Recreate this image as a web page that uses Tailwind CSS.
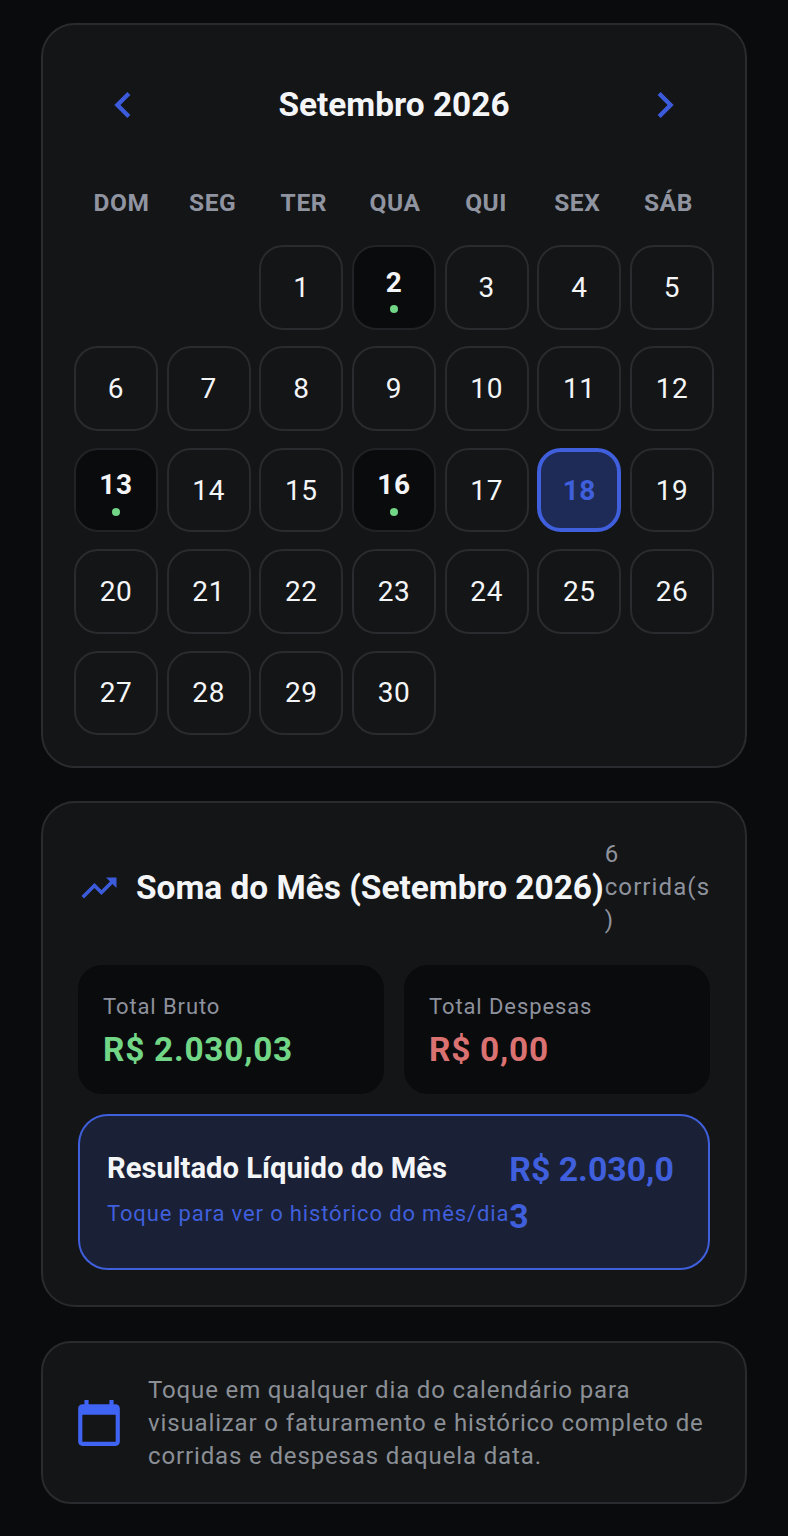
<!DOCTYPE html>
<html lang="pt-BR">
<head>
    <meta charset="UTF-8" />
    <meta name="viewport" content="width=device-width, initial-scale=1.0"/>
    <title>Calendário</title>
    <script src="https://cdn.jsdelivr.net/npm/@tailwindcss/browser@4"></script>
</head>
<body class="bg-[#0a0b0d] font-['Roboto',sans-serif] min-h-screen">
    <main class="w-[706px] ml-[41px] pt-[23px] flex flex-col gap-[33.3px]">

        <!-- calendario -->
        <section class="bg-[#141517] border-2 border-[#2a2b2e] rounded-[34px] px-[31px] pt-[31px] pb-[31px]">
            <div class="h-[98px] flex items-center justify-between pl-[23px] pr-[23px]">
                <svg class="w-[52px] h-[52px] text-[#3b5bdb]" viewBox="0 0 24 24" fill="currentColor"><path d="M15.41 7.41L14 6l-6 6 6 6 1.41-1.41L10.83 12z"/></svg>
                <h1 class="text-[33.4px] leading-none font-bold text-[#f4f5f7]">Setembro 2026</h1>
                <svg class="w-[52px] h-[52px] text-[#3b5bdb]" viewBox="0 0 24 24" fill="currentColor"><path d="M10 6L8.59 7.41 13.17 12l-4.58 4.59L10 18l6-6z"/></svg>
            </div>

            <div class="grid grid-cols-7 pl-[2px] mt-[33px] mb-[26px] text-center text-[24.5px] leading-[32px] font-bold tracking-[0.6px] text-[#9094a0]">
                <div>DOM</div><div>SEG</div><div>TER</div><div>QUA</div><div>QUI</div><div>SEX</div><div>SÁB</div>
            </div>

            <div class="grid grid-cols-7 gap-x-[8.67px] gap-y-[16.9px] text-[28px] tracking-[0.6px] text-[#f4f5f7]">
                <div></div><div></div>
                <div class="h-[84.5px] pt-px rounded-[24px] border-2 border-[#2a2b2e] flex items-center justify-center">1</div>
                <div class="h-[84.5px] rounded-[24px] border-2 border-[#222326] bg-[#0a0b0d] flex flex-col items-center justify-center pt-[5px] font-bold"><span class="leading-[32px]">2</span><span class="w-[8px] h-[8px] mt-[6.5px] rounded-full bg-[#72d687]"></span></div>
                <div class="h-[84.5px] pt-px rounded-[24px] border-2 border-[#2a2b2e] flex items-center justify-center">3</div>
                <div class="h-[84.5px] pt-px rounded-[24px] border-2 border-[#2a2b2e] flex items-center justify-center">4</div>
                <div class="h-[84.5px] pt-px rounded-[24px] border-2 border-[#2a2b2e] flex items-center justify-center">5</div>

                <div class="h-[84.5px] pt-px rounded-[24px] border-2 border-[#2a2b2e] flex items-center justify-center">6</div>
                <div class="h-[84.5px] pt-px rounded-[24px] border-2 border-[#2a2b2e] flex items-center justify-center">7</div>
                <div class="h-[84.5px] pt-px rounded-[24px] border-2 border-[#2a2b2e] flex items-center justify-center">8</div>
                <div class="h-[84.5px] pt-px rounded-[24px] border-2 border-[#2a2b2e] flex items-center justify-center">9</div>
                <div class="h-[84.5px] pt-px rounded-[24px] border-2 border-[#2a2b2e] flex items-center justify-center">10</div>
                <div class="h-[84.5px] pt-px rounded-[24px] border-2 border-[#2a2b2e] flex items-center justify-center">11</div>
                <div class="h-[84.5px] pt-px rounded-[24px] border-2 border-[#2a2b2e] flex items-center justify-center">12</div>

                <div class="h-[84.5px] rounded-[24px] border-2 border-[#222326] bg-[#0a0b0d] flex flex-col items-center justify-center pt-[5px] font-bold"><span class="leading-[32px]">13</span><span class="w-[8px] h-[8px] mt-[6.5px] rounded-full bg-[#72d687]"></span></div>
                <div class="h-[84.5px] pt-px rounded-[24px] border-2 border-[#2a2b2e] flex items-center justify-center">14</div>
                <div class="h-[84.5px] pt-px rounded-[24px] border-2 border-[#2a2b2e] flex items-center justify-center">15</div>
                <div class="h-[84.5px] rounded-[24px] border-2 border-[#222326] bg-[#0a0b0d] flex flex-col items-center justify-center pt-[5px] font-bold"><span class="leading-[32px]">16</span><span class="w-[8px] h-[8px] mt-[6.5px] rounded-full bg-[#72d687]"></span></div>
                <div class="h-[84.5px] pt-px rounded-[24px] border-2 border-[#2a2b2e] flex items-center justify-center">17</div>
                <div class="h-[84.5px] pt-px rounded-[24px] border-4 border-[#3f5fdc] bg-[#1e2b56] text-[#3f5fdc] font-bold flex items-center justify-center">18</div>
                <div class="h-[84.5px] pt-px rounded-[24px] border-2 border-[#2a2b2e] flex items-center justify-center">19</div>

                <div class="h-[84.5px] pt-px rounded-[24px] border-2 border-[#2a2b2e] flex items-center justify-center">20</div>
                <div class="h-[84.5px] pt-px rounded-[24px] border-2 border-[#2a2b2e] flex items-center justify-center">21</div>
                <div class="h-[84.5px] pt-px rounded-[24px] border-2 border-[#2a2b2e] flex items-center justify-center">22</div>
                <div class="h-[84.5px] pt-px rounded-[24px] border-2 border-[#2a2b2e] flex items-center justify-center">23</div>
                <div class="h-[84.5px] pt-px rounded-[24px] border-2 border-[#2a2b2e] flex items-center justify-center">24</div>
                <div class="h-[84.5px] pt-px rounded-[24px] border-2 border-[#2a2b2e] flex items-center justify-center">25</div>
                <div class="h-[84.5px] pt-px rounded-[24px] border-2 border-[#2a2b2e] flex items-center justify-center">26</div>

                <div class="h-[84.5px] pt-px rounded-[24px] border-2 border-[#2a2b2e] flex items-center justify-center">27</div>
                <div class="h-[84.5px] pt-px rounded-[24px] border-2 border-[#2a2b2e] flex items-center justify-center">28</div>
                <div class="h-[84.5px] pt-px rounded-[24px] border-2 border-[#2a2b2e] flex items-center justify-center">29</div>
                <div class="h-[84.5px] pt-px rounded-[24px] border-2 border-[#2a2b2e] flex items-center justify-center">30</div>
            </div>
        </section>

        <!-- soma do mes -->
        <section class="bg-[#141517] border-2 border-[#2a2b2e] rounded-[34px] p-[35px]">
            <div class="flex items-center mb-[27.5px]">
                <svg class="w-[42px] h-[42px] shrink-0 mr-[16px] text-[#3b5bdb]" viewBox="0 0 24 24" fill="currentColor"><path d="M16 6l2.29 2.29-4.88 4.88-4-4L2 16.59 3.41 18l6-6 4 4 6.3-6.29L22 12V6z"/></svg>
                <h2 class="text-[33.4px] leading-[40px] font-bold text-[#f4f5f7] whitespace-nowrap">Soma do Mês (Setembro 2026)</h2>
                <span class="w-[106px] ml-px text-[24px] leading-[33px] tracking-[1.1px] text-[#8e929d] break-words">6 corrida(s)</span>
            </div>

            <div class="grid grid-cols-2 gap-[20px] mb-[20px]">
                <div class="h-[129px] rounded-[24px] bg-[#0a0b0d] px-[25px] pt-[26px]">
                    <p class="text-[22px] leading-[32px] tracking-[0.9px] text-[#8e929d]">Total Bruto</p>
                    <p class="mt-[7px] text-[33.4px] leading-[40px] font-bold tracking-[0.75px] text-[#72d687]">R$ 2.030,03</p>
                </div>
                <div class="h-[129px] rounded-[24px] bg-[#0a0b0d] px-[25px] pt-[26px]">
                    <p class="text-[22px] leading-[32px] tracking-[0.9px] text-[#8e929d]">Total Despesas</p>
                    <p class="mt-[7px] text-[33.4px] leading-[40px] font-bold tracking-[0.75px] text-[#db7272]">R$ 0,00</p>
                </div>
            </div>

            <div class="h-[156.5px] rounded-[30px] border-2 border-[#3f5fdc] bg-[#1a2035] pl-[27px] pt-[30px] flex">
                <div>
                    <p class="text-[29.2px] leading-[44px] font-bold text-[#f4f5f7] whitespace-nowrap">Resultado Líquido do Mês</p>
                    <p class="text-[22px] leading-[32px] tracking-[0.86px] text-[#3f5fdc] whitespace-nowrap mt-[8px]">Toque para ver o histórico do mês/dia</p>
                </div>
                <p class="w-[172px] text-[33.8px] leading-[47px] font-bold text-[#3f5fdc] break-all">R$ 2.030,03</p>
            </div>
        </section>

        <!-- aviso -->
        <section class="bg-[#141517] border-2 border-[#2a2b2e] rounded-[30px] px-[31px] pt-[31px] pb-[29px] flex items-center gap-[24px]">
            <svg class="w-[50px] h-[50px] shrink-0 text-[#3f63f2]" viewBox="0 0 24 24" fill="currentColor"><path d="M20 3h-1V1h-2v2H7V1H5v2H4c-1.1 0-2 .9-2 2v16c0 1.1.9 2 2 2h16c1.1 0 2-.9 2-2V5c0-1.1-.9-2-2-2zm0 18H4V8h16v13z"/></svg>
            <p class="text-[24px] leading-[33px] tracking-[0.86px] text-[#8b8f96]">Toque em qualquer dia do calendário para visualizar o faturamento e histórico completo de corridas e despesas daquela data.</p>
        </section>
    </main>
</body>
</html>
